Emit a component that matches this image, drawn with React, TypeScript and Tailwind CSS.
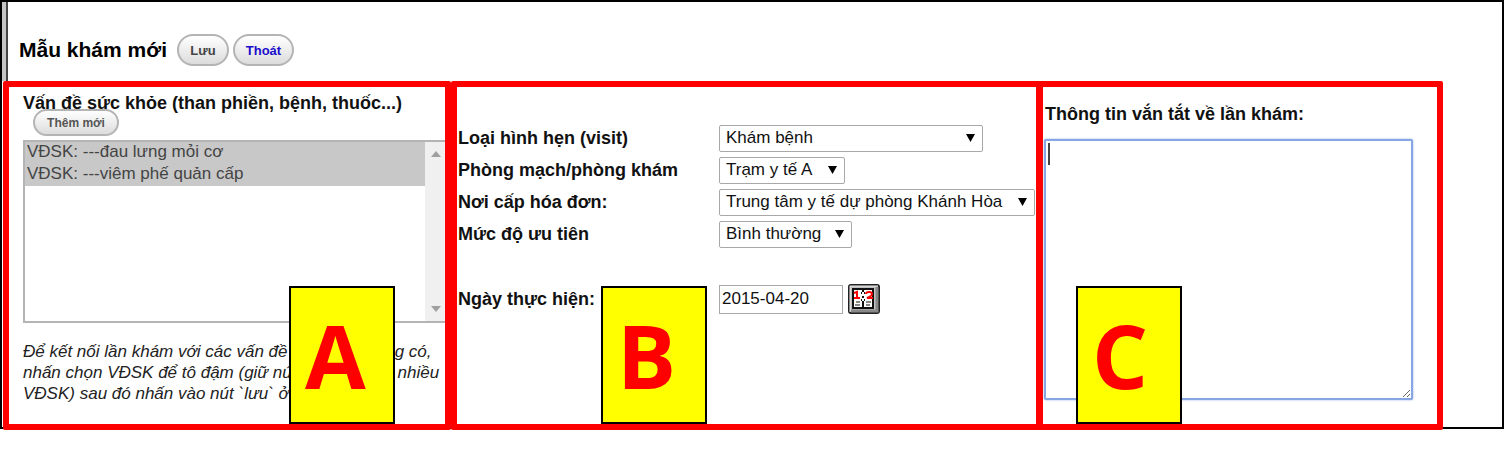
import { useId } from "react";
import type { ReactNode } from "react";

const problems = ["VĐSK: ---đau lưng mỏi cơ", "VĐSK: ---viêm phế quản cấp"];

interface PillProps {
  children: ReactNode;
  className?: string;
}

function Pill({ children, className = "" }: PillProps) {
  return (
    <button
      type="button"
      className={`rounded-full border-2 border-[#b4b4b4] bg-linear-to-b from-white to-[#dcdcdc] leading-none font-bold ${className}`}
    >
      {children}
    </button>
  );
}

function Marker({ letter, className }: { letter: string; className: string }) {
  return (
    <div
      className={`absolute bottom-0 flex h-[138px] w-[106px] items-center border-2 border-black bg-[#ffff00] pl-[14px] font-['Open_Sans',sans-serif] text-[88px] leading-none font-bold text-[#ff0000] ${className}`}
    >
      {letter}
    </div>
  );
}

interface SelectRowProps {
  label: string;
  value: string;
  width: string;
}

function SelectRow({ label, value, width }: SelectRowProps) {
  const id = useId();
  return (
    <div className="flex h-8 items-center">
      <label htmlFor={id} className="w-[261px] shrink-0 font-bold">
        {label}
      </label>
      <div className={`relative shrink-0 ${width}`}>
        <select
          id={id}
          className="block h-[27px] w-full appearance-none rounded-xs border border-[#a8a8a8] bg-white pl-[6px] text-[17px] leading-[24px]"
        >
          <option>{value}</option>
        </select>
        <svg
          viewBox="0 0 8 8"
          preserveAspectRatio="none"
          className="pointer-events-none absolute top-[9px] right-2 h-2 w-[9px]"
        >
          <path d="M0 0h8L4 8z" fill="#000" />
        </svg>
      </div>
    </div>
  );
}

function CalendarIcon() {
  return (
    <svg viewBox="0 0 32 30" className="h-[30px] w-8">
      <rect x="1" y="1" width="30" height="28" rx="2" fill="#c0c0c0" stroke="#222" strokeWidth="2" />
      <path d="M2 28V2h28" fill="none" stroke="#eee" strokeWidth="1" />
      <path d="M3 27h26V3" fill="none" stroke="#888" strokeWidth="3" />
      <rect x="5" y="5" width="20" height="19" fill="#fff" stroke="#111" strokeWidth="2" />
      <path d="M15 5v3M15 12v2M15 17v7" stroke="#111" strokeWidth="2" />
      <path d="M13 9h1M16 9h1M13 16h1M16 16h1" stroke="#111" strokeWidth="2" />
      <path d="M6 9l3-1v6M6 14h6" fill="none" stroke="#f00" strokeWidth="2" />
      <path d="M18 10q0-2 3-2t3 2-5 4h6" fill="none" stroke="#f00" strokeWidth="2" />
      <path d="M8 18h4M7 21h5M18 18h5M18 21h4" stroke="#111" strokeWidth="1" />
    </svg>
  );
}

function ProblemsPanel() {
  return (
    <section className="relative overflow-hidden rounded-xs border-6 border-[#ff0000] pt-[5px] pl-[14px]">
      <label htmlFor="problems" className="block font-bold whitespace-nowrap">
        Vấn đề sức khỏe (than phiền, bệnh, thuốc...)
      </label>
      <Pill className="relative -mt-[5px] ml-[10px] block h-[27px] w-[86px] text-xs text-[#555]">
        Thêm mới
      </Pill>
      <div className="mt-1 flex h-[183px] border-2 border-r-0 border-[#b4b4b4]">
        <select
          id="problems"
          multiple
          defaultValue={problems}
          className="min-w-0 flex-1 appearance-none overflow-hidden bg-white p-0 text-[17px] text-[#444]"
        >
          {problems.map((p) => (
            <option key={p} className="h-[22px] px-[2px] leading-[24px] text-[#444] checked:bg-[#c8c8c8]">
              {p}
            </option>
          ))}
        </select>
        <div className="flex w-5 flex-col items-center justify-between bg-[#f0f0f0] py-[9px] pl-[2px]">
          <svg viewBox="0 0 10 6" className="h-[6px] w-[10px]">
            <path d="M0 6h10L5 0z" fill="#a0a0a0" />
          </svg>
          <svg viewBox="0 0 10 6" className="h-[6px] w-[10px]">
            <path d="M0 0h10L5 6z" fill="#a0a0a0" />
          </svg>
        </div>
      </div>
      <p className="mt-[18px] text-[17px] leading-[21px] whitespace-nowrap text-[#222] italic">
        Để kết nối lần khám với các vấn đề sức khỏe đang có,
        <br />
        nhấn chọn VĐSK để tô đậm (giữ nút Ctrl để chọn nhiều
        <br />
        VĐSK) sau đó nhấn vào nút `lưu` ở trên
      </p>
      <Marker letter="A" className="left-[280px]" />
    </section>
  );
}

function VisitPanel() {
  return (
    <section className="relative rounded-xs border-6 border-[#ff0000] pt-[35px] pl-px">
      <SelectRow label="Loại hình hẹn (visit)" value="Khám bệnh" width="w-[264px]" />
      <SelectRow label="Phòng mạch/phòng khám" value="Trạm y tế A" width="w-[126px]" />
      <SelectRow label="Nơi cấp hóa đơn:" value="Trung tâm y tế dự phòng Khánh Hòa" width="w-[316px]" />
      <SelectRow label="Mức độ ưu tiên" value="Bình thường" width="w-[133px]" />
      <div className="mt-[33px] flex h-8 items-center">
        <label htmlFor="date" className="w-[261px] shrink-0 font-bold">
          Ngày thực hiện:
        </label>
        <input
          id="date"
          type="text"
          defaultValue="2015-04-20"
          className="h-[29px] w-[124px] border border-[#a8a8a8] bg-white px-[2px] text-[17px]"
        />
        <button type="button" aria-label="Chọn ngày" className="ml-[5px]">
          <CalendarIcon />
        </button>
      </div>
      <Marker letter="B" className="left-[144px]" />
    </section>
  );
}

function SummaryPanel() {
  return (
    <section className="relative -ml-[5px] rounded-xs border-6 border-[#ff0000] pt-4 pr-[24px]">
      <label htmlFor="summary" className="block pl-[2px] font-bold whitespace-nowrap">
        Thông tin vắn tắt về lần khám:
      </label>
      <div className="relative mt-[14px] ml-px">
        <textarea
          id="summary"
          className="block h-[261px] w-full resize rounded-xs border-2 border-[#86a7e2] bg-white p-1 text-[17px] caret-transparent shadow-[0_0_2px_#86a7e2] outline-none"
        />
        <span className="pointer-events-none absolute top-1 left-1 h-[22px] w-[2px] bg-[#444]" />
      </div>
      <Marker letter="C" className="left-[33px]" />
    </section>
  );
}

export default function App() {
  return (
    <main className="bg-white pb-[46px] font-['Liberation_Sans',Arial,sans-serif] text-[18px] leading-[22px] text-[#111]">
      <div className="border-2 border-b-0 border-black">
        <div className="border-l-4 border-[#c4c4c4]">
          <div className="border-l-2 border-[#444] pt-8 pb-[15px] pl-[11px]">
            <header className="flex items-center">
              <h1 className="text-[21px] leading-8 font-bold text-black">Mẫu khám mới</h1>
              <Pill className="ml-[10px] h-8 w-[52px] text-[13px] text-[#444]">Lưu</Pill>
              <Pill className="ml-1 h-8 w-[61px] text-[13px] text-[#1a0dcc]">Thoát</Pill>
            </header>
          </div>
        </div>
      </div>
      <div className="border-x-2 border-b-2 border-black pr-[59px] pl-px">
        <div className="-mb-[3px] grid grid-cols-[448fr_591fr_401fr] grid-rows-[349px]">
          <ProblemsPanel />
          <VisitPanel />
          <SummaryPanel />
        </div>
      </div>
    </main>
  );
}
